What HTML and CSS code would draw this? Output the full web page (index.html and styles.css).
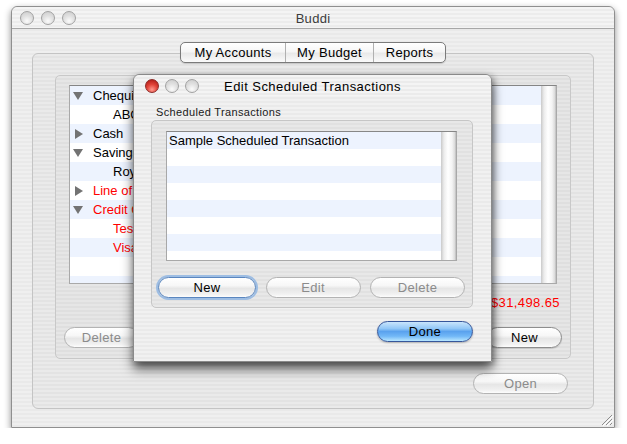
FILE: index.html
```html
<!DOCTYPE html>
<html lang="en">
<head>
    <meta charset="utf-8">
    <title>Buddi</title>
    <link rel="stylesheet" href="styles.css">
</head>
<body>
<div class="window">
    <div class="titlebar">
        <div class="lights">
            <span class="light"></span><span class="light"></span><span class="light"></span>
        </div>
        <div class="title">Buddi</div>
    </div>
    <div class="content">
        <div class="tabs">
            <span class="tab">My Accounts</span>
            <span class="tab">My Budget</span>
            <span class="tab">Reports</span>
        </div>
        <div class="tabpanel">
            <div class="groupbox">
                <div class="tree">
                    <div class="rows">
                        <div class="row"><span class="tri down"></span>Chequing</div>
                        <div class="row child">ABC</div>
                        <div class="row"><span class="tri right"></span>Cash</div>
                        <div class="row"><span class="tri down"></span>Savings</div>
                        <div class="row child">Royal</div>
                        <div class="row red"><span class="tri right"></span>Line of Credit</div>
                        <div class="row red"><span class="tri down"></span>Credit Card</div>
                        <div class="row child red">Test</div>
                        <div class="row child red">Visa</div>
                        <div class="row"></div>
                        <div class="row"></div>
                    </div>
                    <div class="scrollbar"></div>
                </div>
                <div class="total">$31,498.65</div>
                <div class="btnrow">
                    <span class="btn disabled">Delete</span>
                    <span class="btn">New</span>
                </div>
            </div>
            <div class="openrow">
                <span class="btn disabled open">Open</span>
            </div>
        </div>
    </div>
    <div class="grip">
        <svg width="14" height="14" viewBox="0 0 14 14">
            <path d="M13 3 L3 13 M13 7 L7 13 M13 11 L11 13" stroke="#8c8c8c" stroke-width="1"/>
            <path d="M14 4 L4 14 M14 8 L8 14" stroke="#fff" stroke-width="1"/>
        </svg>
    </div>
</div>

<div class="dialog">
    <div class="dlg-titlebar">
        <div class="lights">
            <span class="light close"></span><span class="light"></span><span class="light"></span>
        </div>
        <div class="dlg-title">Edit Scheduled Transactions</div>
    </div>
    <div class="dlg-body">
        <div class="label">Scheduled Transactions</div>
        <div class="dlg-group">
            <div class="list">
                <div class="rows">
                    <div class="lrow">Sample Scheduled Transaction</div>
                    <div class="lrow"></div>
                    <div class="lrow"></div>
                    <div class="lrow"></div>
                    <div class="lrow"></div>
                    <div class="lrow"></div>
                    <div class="lrow"></div>
                    <div class="lrow"></div>
                </div>
                <div class="scrollbar"></div>
            </div>
            <div class="dlg-buttons">
                <span class="btn focus w-new">New</span>
                <span class="btn disabled w-edit">Edit</span>
                <span class="btn disabled w-edit">Delete</span>
            </div>
        </div>
        <div class="done-row">
            <span class="btn default">Done</span>
        </div>
    </div>
</div>
</body>
</html>
```

FILE: styles.css
```css
body {
    margin: 0;
    background: #fff;
    font-family: "Liberation Sans", "DejaVu Sans", sans-serif;
    font-size: 13px;
    color: #000;
}

.window {
    position: relative;
    box-sizing: border-box;
    margin: 6px 0 0 11px;
    width: 604px;
    height: 422px;
    border: 1px solid #8f8f8f;
    border-radius: 6px 6px 0 0;
    background: repeating-linear-gradient(#efefef 0 2px, #e9e9e9 2px 4px);
    box-shadow: 0 3px 7px rgba(0, 0, 0, .45);
}

.titlebar {
    position: relative;
    height: 21px;
    border-bottom: 1px solid #a7a7a7;
    border-radius: 6px 6px 0 0;
    background: repeating-linear-gradient(#f4f4f4 0 2px, #ececec 2px 4px);
}

.lights {
    display: flex;
    gap: 7px;
    padding: 4px 0 0 8px;
}

.light {
    width: 14px;
    height: 14px;
    box-sizing: border-box;
    border-radius: 50%;
    border: 1px solid #a2a2a2;
    background: radial-gradient(circle at 50% 75%, #fbfbfb 0, #e2e2e2 45%, #c9c9c9 100%);
}

.light.close {
    border-color: #8c2a27;
    background: radial-gradient(circle at 50% 80%, #ff9a8f 0, #e2453a 45%, #a5120e 100%);
}

.title {
    position: absolute;
    left: 0;
    right: 0;
    top: 4px;
    text-align: center;
    color: #3c3c3c;
    letter-spacing: .3px;
}

.content {
    padding: 13px 20px 0 20px;
}

.tabs {
    position: relative;
    z-index: 1;
    display: flex;
    width: 266px;
    height: 21px;
    margin: 0 auto -10px auto;
    box-sizing: border-box;
    border: 1px solid #7b7b7b;
    border-radius: 5px;
    background: linear-gradient(#ffffff 0, #f6f6f6 45%, #e9e9e9 55%, #fbfbfb 100%);
    box-shadow: 0 1px 1px rgba(0, 0, 0, .15);
}

.tab {
    display: flex;
    align-items: center;
    justify-content: center;
    line-height: 19px;
    letter-spacing: .3px;
}

.tab:nth-child(1) {
    width: 104px;
    border-right: 1px solid #b0b0b0;
}

.tab:nth-child(2) {
    width: 87px;
    border-right: 1px solid #b0b0b0;
}

.tab:nth-child(3) {
    flex: 1;
}

.tabpanel {
    box-sizing: border-box;
    height: 356px;
    padding: 21px 22px 0 22px;
    border: 1px solid #c4c4c4;
    border-radius: 6px;
    background: repeating-linear-gradient(#eaeaea 0 2px, #e3e3e3 2px 4px);
}

.groupbox {
    box-sizing: border-box;
    height: 284px;
    padding: 9px 13px 0 13px;
    border: 1px solid #c8c8c8;
    border-radius: 5px;
    background: repeating-linear-gradient(#e6e6e6 0 2px, #dfdfdf 2px 4px);
}

.tree {
    display: flex;
    height: 199px;
    box-sizing: border-box;
    border: 1px solid #a9a9a9;
    border-top-color: #858585;
    background: #fff;
    overflow: hidden;
}

.rows {
    flex: 1;
}

.row {
    display: flex;
    align-items: center;
    height: 19px;
    padding-left: 23px;
    position: relative;
    white-space: nowrap;
}

.row:nth-child(odd) {
    background: #edf3fe;
}

.row.child {
    padding-left: 43px;
}

.row.red {
    color: #f00;
}

.tri {
    position: absolute;
    width: 0;
    height: 0;
}

.tri.down {
    left: 3px;
    top: 6px;
    border-left: 5px solid transparent;
    border-right: 5px solid transparent;
    border-top: 8px solid #737373;
}

.tri.right {
    left: 5px;
    top: 5px;
    border-top: 5px solid transparent;
    border-bottom: 5px solid transparent;
    border-left: 8px solid #737373;
}

.scrollbar {
    width: 15px;
    background: linear-gradient(to right, #c9c9c9 0, #ececec 3px, #ffffff 7px, #f4f4f4 11px, #d9d9d9 14px, #b4b4b4 15px);
}

.total {
    margin-top: 11px;
    margin-right: -3px;
    text-align: right;
    color: #f00;
    letter-spacing: .4px;
    line-height: 16px;
}

.btnrow {
    display: flex;
    justify-content: space-between;
    margin: 16px -5px 0 -5px;
}

.btn {
    display: inline-flex;
    align-items: center;
    justify-content: center;
    box-sizing: border-box;
    height: 21px;
    width: 75px;
    border: 1px solid #8d8d8d;
    border-radius: 11px;
    background: linear-gradient(#ffffff 0, #f7f7f7 40%, #e6e6e6 55%, #f1f1f1 85%, #fdfdfd 100%);
    box-shadow: 0 1px 1px rgba(0, 0, 0, .15);
    letter-spacing: .3px;
}

.btn.disabled {
    color: #8b8b8b;
    border-color: #b3b3b3;
    box-shadow: none;
}

.openrow {
    display: flex;
    justify-content: flex-end;
    padding: 14px 3px 0 0;
}

.btn.open {
    width: 95px;
}

.grip {
    position: absolute;
    right: 1px;
    bottom: 1px;
    width: 14px;
    height: 14px;
}

.grip svg {
    display: block;
}

/* sheet dialog */
.dialog {
    position: absolute;
    left: 133px;
    top: 74px;
    width: 359px;
    height: 288px;
    box-sizing: border-box;
    border: 1px solid #8a8a8a;
    border-radius: 6px 6px 0 0;
    background: repeating-linear-gradient(#f1f1f1 0 2px, #eaeaea 2px 4px);
    box-shadow: 0 7px 12px rgba(0, 0, 0, .6), 2px 2px 6px rgba(0, 0, 0, .3);
}

.dlg-titlebar {
    position: relative;
    height: 21px;
    border-radius: 6px 6px 0 0;
    background: repeating-linear-gradient(#f4f4f4 0 2px, #ebebeb 2px 4px);
}

.dlg-titlebar .lights {
    padding: 4px 0 0 11px;
    gap: 6px;
}

.dlg-title {
    position: absolute;
    left: 0;
    right: 0;
    top: 4px;
    text-align: center;
    letter-spacing: .45px;
}

.dlg-body {
    padding: 0 18px 0 17px;
}

.label {
    font-size: 11px;
    line-height: 13px;
    padding: 10px 0 0 5px;
    margin-bottom: 1px;
    letter-spacing: .35px;
    color: #1a1a1a;
}

.dlg-group {
    box-sizing: border-box;
    height: 188px;
    padding: 10px 15px 0 14px;
    border: 1px solid #c6c6c6;
    border-radius: 5px;
    background: repeating-linear-gradient(#e8e8e8 0 2px, #e1e1e1 2px 4px);
}

.list {
    display: flex;
    height: 130px;
    box-sizing: border-box;
    border: 1px solid #a8a8a8;
    border-top-color: #878787;
    background: #fff;
    overflow: hidden;
}

.lrow {
    height: 17px;
    line-height: 17px;
    padding-left: 2px;
    white-space: nowrap;
}

.lrow:nth-child(odd) {
    background: #edf3fe;
}

.dlg-buttons {
    display: flex;
    justify-content: space-between;
    margin: 16px -8px 0 -8px;
}

.btn.w-new {
    width: 98px;
}

.btn.w-edit {
    width: 95px;
}

.btn.focus {
    border-color: #5a86bf;
    box-shadow: 0 0 0 2px #9dbde3;
}

.done-row {
    display: flex;
    justify-content: flex-end;
    padding-top: 13px;
}

.btn.default {
    width: 96px;
    border-color: #36569a;
    background: linear-gradient(#c9e5fc 0, #91c7f7 35%, #5aa2ee 50%, #72b8f7 75%, #b9e7ff 100%);
    box-shadow: 0 1px 2px rgba(0, 0, 0, .25);
}
```
